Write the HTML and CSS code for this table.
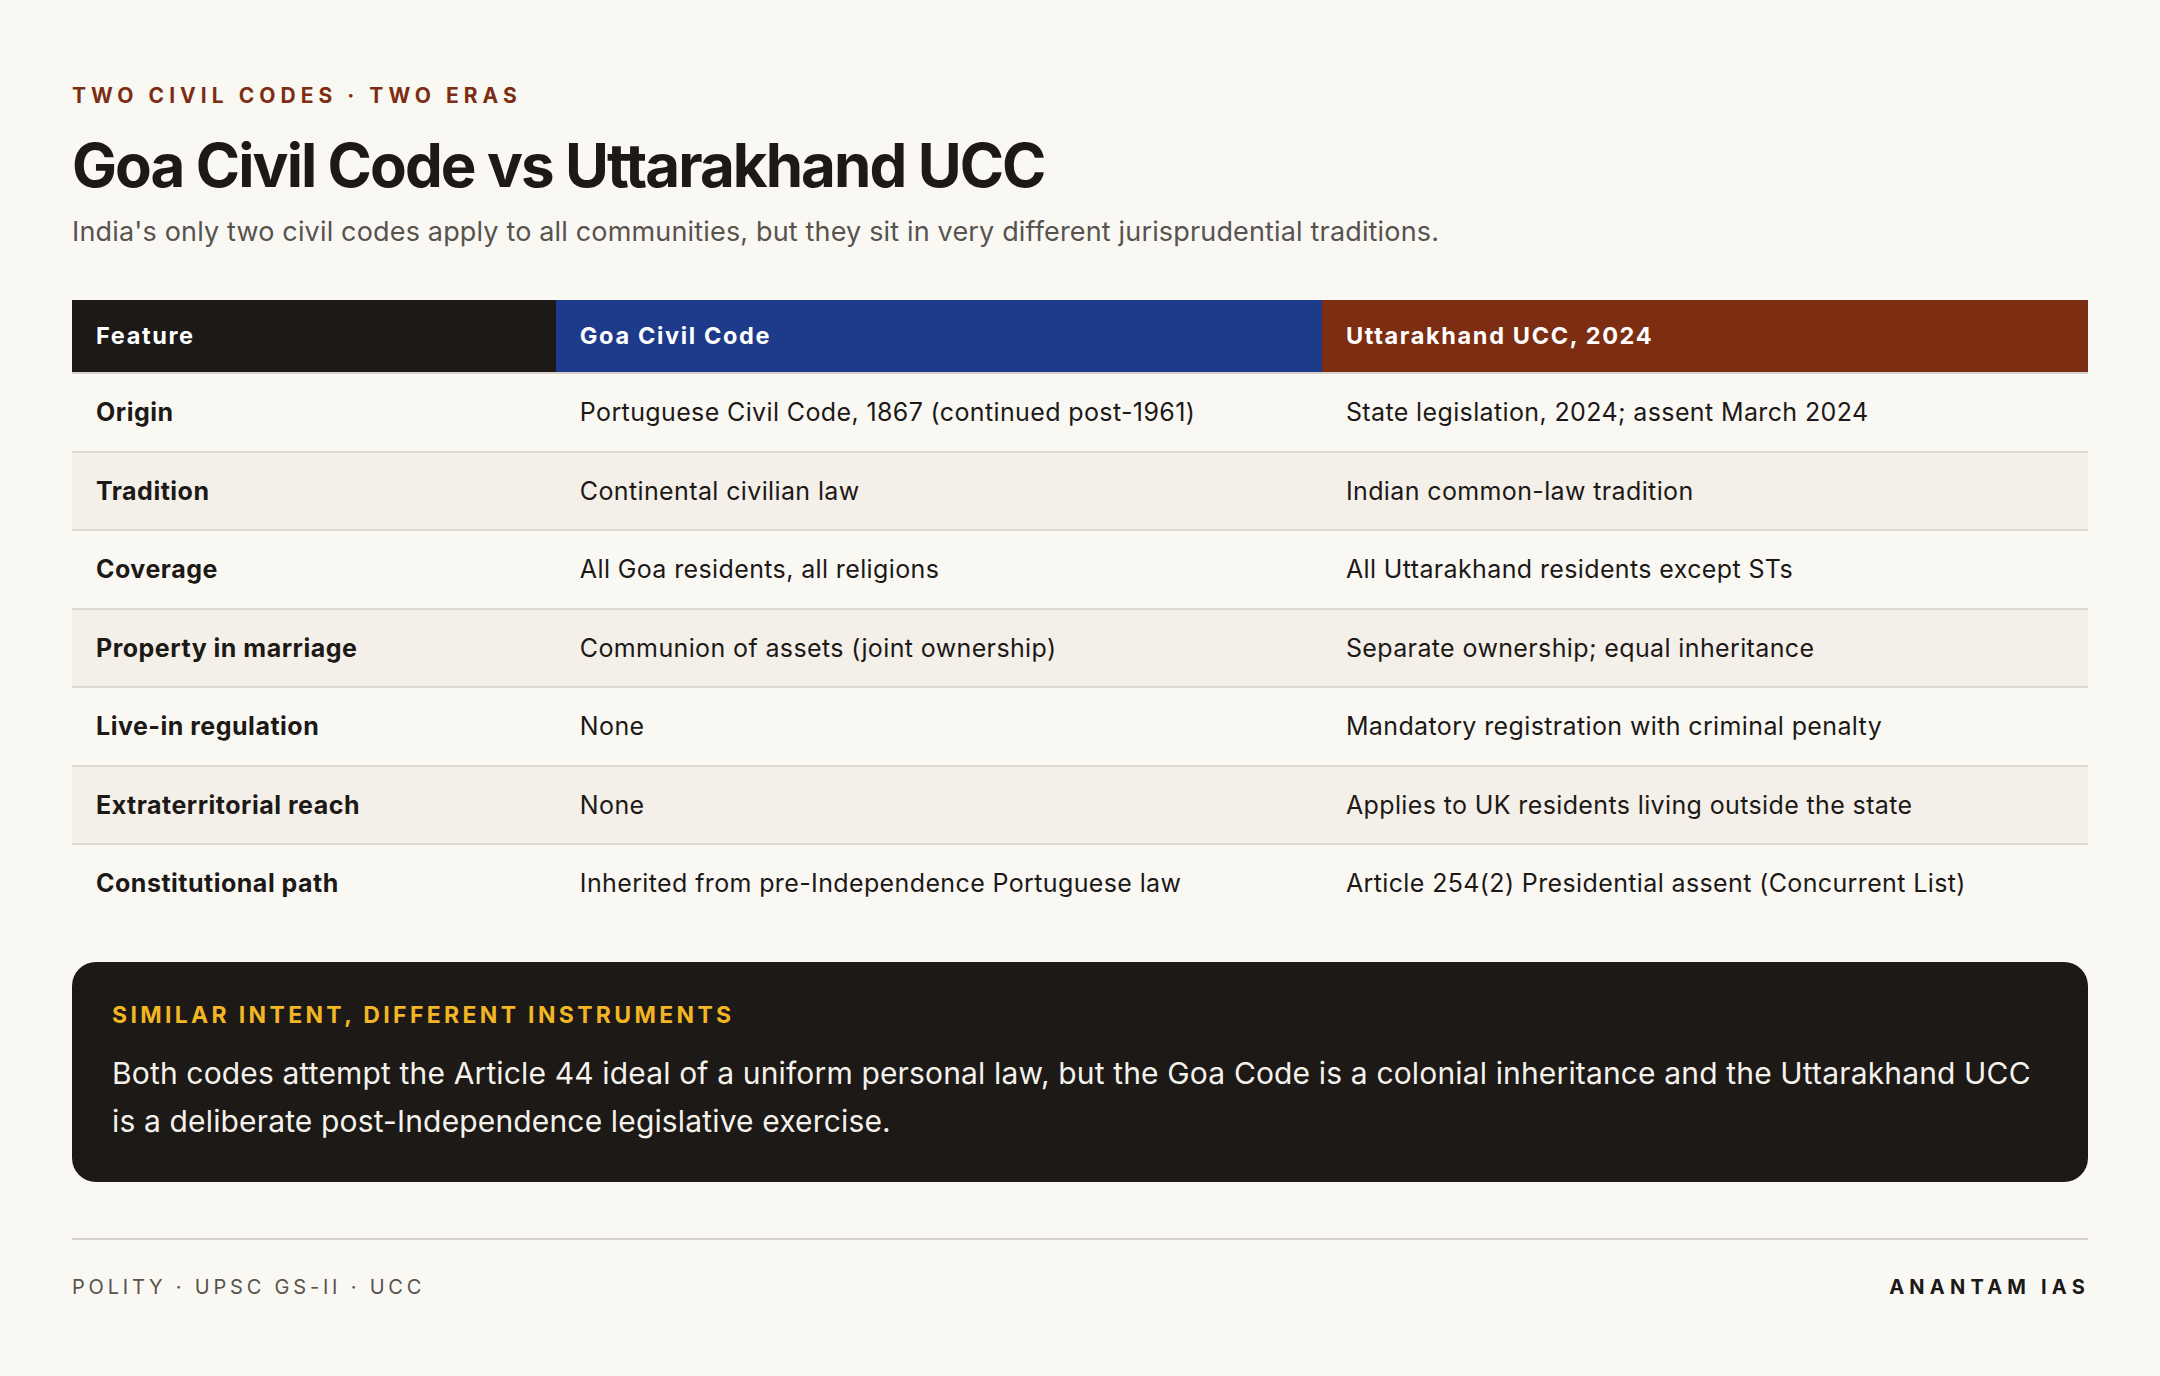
FILE: index.html
```html
<!DOCTYPE html>
<html lang="en">
<head>
<meta charset="utf-8">
<title>Goa Civil Code vs Uttarakhand UCC</title>
<link rel="stylesheet" href="styles.css">
</head>
<body>
<main class="page">
  <header class="intro">
    <div class="eyebrow">Two civil codes · Two eras</div>
    <h1 class="title">Goa Civil Code vs Uttarakhand UCC</h1>
    <p class="subtitle">India's only two civil codes apply to all communities, but they sit in very different jurisprudential traditions.</p>
  </header>

  <table class="compare">
    <colgroup>
      <col class="c-feature">
      <col class="c-goa">
      <col class="c-uk">
    </colgroup>
    <thead>
      <tr>
        <th class="h-feature">Feature</th>
        <th class="h-goa">Goa Civil Code</th>
        <th class="h-uk">Uttarakhand UCC, 2024</th>
      </tr>
    </thead>
    <tbody>
      <tr>
        <td class="feat">Origin</td>
        <td>Portuguese Civil Code, 1867 (continued post-1961)</td>
        <td>State legislation, 2024; assent March 2024</td>
      </tr>
      <tr>
        <td class="feat">Tradition</td>
        <td>Continental civilian law</td>
        <td>Indian common-law tradition</td>
      </tr>
      <tr>
        <td class="feat">Coverage</td>
        <td>All Goa residents, all religions</td>
        <td>All Uttarakhand residents except STs</td>
      </tr>
      <tr>
        <td class="feat">Property in marriage</td>
        <td>Communion of assets (joint ownership)</td>
        <td>Separate ownership; equal inheritance</td>
      </tr>
      <tr>
        <td class="feat">Live-in regulation</td>
        <td>None</td>
        <td>Mandatory registration with criminal penalty</td>
      </tr>
      <tr>
        <td class="feat">Extraterritorial reach</td>
        <td>None</td>
        <td>Applies to UK residents living outside the state</td>
      </tr>
      <tr>
        <td class="feat">Constitutional path</td>
        <td>Inherited from pre-Independence Portuguese law</td>
        <td>Article 254(2) Presidential assent (Concurrent List)</td>
      </tr>
    </tbody>
  </table>

  <section class="callout">
    <div class="callout-label">Similar intent, different instruments</div>
    <p class="callout-body">Both codes attempt the Article 44 ideal of a uniform personal law, but the Goa Code is a colonial inheritance and the Uttarakhand UCC is a deliberate post-Independence legislative exercise.</p>
  </section>

  <footer class="footer">
    <span class="footer-tags">Polity · UPSC GS-II · UCC</span>
    <span class="footer-brand">Anantam IAS</span>
  </footer>
</main>
</body>
</html>
```

FILE: styles.css
```css
* {
  box-sizing: border-box;
}

html, body {
  margin: 0;
  padding: 0;
  background: #faf8f3;
}

body {
  font-family: Inter, "Noto Sans", "Liberation Sans", sans-serif;
  color: #1c1917;
}

.page {
  width: 2160px;
  min-height: 1376px;
  padding: 83px 72px 72px;
  display: flex;
  flex-direction: column;
}

.intro {
  display: flex;
  flex-direction: column;
}

.eyebrow {
  font-size: 21px;
  line-height: 25px;
  font-weight: 700;
  letter-spacing: 0.24em;
  text-transform: uppercase;
  color: #7c2d12;
}

.title {
  margin: 24px 0 0;
  font-size: 60px;
  line-height: 66px;
  font-weight: 700;
  letter-spacing: -0.032em;
  color: #1c1917;
}

.subtitle {
  margin: 16px 0 0;
  font-size: 27px;
  line-height: 36px;
  letter-spacing: 0.006em;
  color: #57534e;
}

.compare {
  margin-top: 50px;
  width: 100%;
  border-collapse: collapse;
  table-layout: fixed;
}

.c-feature { width: 24%; }
.c-goa { width: 38%; }
.c-uk { width: 38%; }

.compare th {
  text-align: left;
  font-size: 23.5px;
  line-height: 26px;
  font-weight: 700;
  letter-spacing: 0.07em;
  color: #ffffff;
  padding: 23px 24px;
  border-bottom: 2px solid #d6d2cb;
}

.h-feature { background: #1c1917; }
.h-goa { background: #1e3a8a; }
.h-uk { background: #7c2d12; }

.compare td {
  font-size: 25px;
  line-height: 32px;
  letter-spacing: 0.015em;
  padding: 22.25px 24px;
  color: #1c1917;
  border-bottom: 2px solid #dcd8d2;
  vertical-align: middle;
}

.compare tbody tr:nth-child(even) td {
  background: #f4efe8;
}

.compare tbody tr:last-child td {
  border-bottom: none;
}

.compare td.feat {
  font-weight: 700;
  letter-spacing: 0.02em;
}

.callout {
  margin-top: 40px;
  background: #1c1917;
  border-radius: 24px;
  padding: 40px 40px 37px;
}

.callout-label {
  font-size: 23px;
  line-height: 26px;
  font-weight: 700;
  letter-spacing: 0.145em;
  text-transform: uppercase;
  color: #f2b523;
}

.callout-body {
  margin: 21px 0 0;
  font-size: 30px;
  line-height: 48px;
  letter-spacing: 0.005em;
  color: #f5f2ec;
}

.footer {
  margin-top: 56px;
  border-top: 2px solid #d6d3ce;
  padding-top: 35px;
  display: flex;
  justify-content: space-between;
  align-items: baseline;
}

.footer-tags {
  font-size: 20px;
  line-height: 24px;
  letter-spacing: 0.19em;
  text-transform: uppercase;
  color: #57534e;
}

.footer-brand {
  font-size: 20px;
  line-height: 24px;
  font-weight: 700;
  letter-spacing: 0.26em;
  margin-right: -2px;
  text-transform: uppercase;
  color: #1c1917;
}
```
